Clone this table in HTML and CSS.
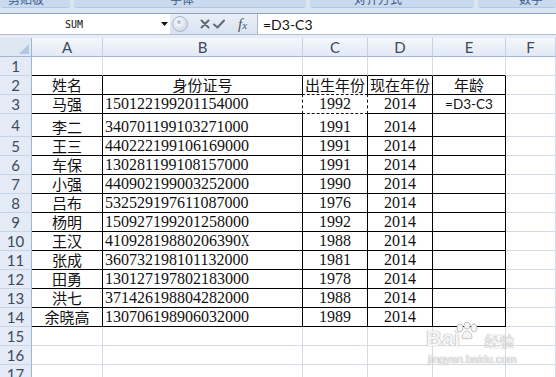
FILE: index.html
```html
<!DOCTYPE html>
<html>
<head>
<meta charset="utf-8">
<link rel="stylesheet" href="styles.css">
</head>
<body>
<div class="ribbon">
  <div class="grp g1"><span>剪贴板</span></div>
  <div class="grp g2"><span>字体</span></div>
  <div class="grp g3"><span>对齐方式</span></div>
  <div class="grp g4"><span>数字</span></div>
</div>
<div class="fbar">
  <div class="namebox">SUM</div>
  <div class="nb-arrow"><svg width="7" height="4" viewBox="0 0 7 4"><path d="M0 0H7L3.5 4Z" fill="#111"/></svg></div>
  <div class="btns">
    <svg class="bubble" width="16" height="18" viewBox="0 0 16 18"><defs><radialGradient id="bg" cx="0.4" cy="0.35" r="0.7"><stop offset="0" stop-color="#ffffff"/><stop offset="1" stop-color="#c9d4e3"/></radialGradient></defs><circle cx="8" cy="9" r="7.5" fill="url(#bg)" stroke="#a9b7ca"/><circle cx="7" cy="7" r="2" fill="#b8c3d2"/></svg>
    <svg class="ic" width="10" height="10" viewBox="0 0 10 10"><path d="M1.5 1.5L8.5 8.5M8.5 1.5L1.5 8.5" stroke="#5e6a7c" stroke-width="2" stroke-linecap="round"/></svg>
    <svg class="ic" width="12" height="10" viewBox="0 0 12 10"><path d="M1 5.5L4.5 8.5L11 1.5" stroke="#5e6a7c" stroke-width="2" fill="none" stroke-linecap="round" stroke-linejoin="round"/></svg>
    <span class="fx"><i>f</i><i class="x">x</i></span>
  </div>
  <div class="formula">=D3-C3</div>
</div>
<div class="spacer"></div>
<div class="sheet">
  <div class="corner"><svg width="10" height="10" viewBox="0 0 10 10"><path d="M10 0V10H0Z" fill="#b4c6e0"/></svg></div>
  <div class="ch">A</div><div class="ch">B</div><div class="ch">C</div><div class="ch">D</div><div class="ch">E</div><div class="ch">F</div>

  <div class="rh">1</div><div class="c tb"></div><div class="c tb"></div><div class="c tb"></div><div class="c tb"></div><div class="c tb"></div><div class="c"></div>

  <div class="rh">2</div><div class="c t cj">姓名</div><div class="c t cj">身份证号</div><div class="c t cj">出生年份</div><div class="c t cj">现在年份</div><div class="c t cj">年龄</div><div class="c"></div>

  <div class="rh">3</div><div class="c t cj">马强</div><div class="c t id">150122199201154000</div><div class="c t copy">1992</div><div class="c t">2014</div><div class="c t fm">=D3-C3</div><div class="c"></div>

  <div class="rh">4</div><div class="c t cj">李二</div><div class="c t id">340701199103271000</div><div class="c t">1991</div><div class="c t">2014</div><div class="c t"></div><div class="c"></div>

  <div class="rh">5</div><div class="c t cj">王三</div><div class="c t id">440222199106169000</div><div class="c t">1991</div><div class="c t">2014</div><div class="c t"></div><div class="c"></div>

  <div class="rh">6</div><div class="c t cj">车保</div><div class="c t id">130281199108157000</div><div class="c t">1991</div><div class="c t">2014</div><div class="c t"></div><div class="c"></div>

  <div class="rh">7</div><div class="c t cj">小强</div><div class="c t id">440902199003252000</div><div class="c t">1990</div><div class="c t">2014</div><div class="c t"></div><div class="c"></div>

  <div class="rh">8</div><div class="c t cj">吕布</div><div class="c t id">532529197611087000</div><div class="c t">1976</div><div class="c t">2014</div><div class="c t"></div><div class="c"></div>

  <div class="rh">9</div><div class="c t cj">杨明</div><div class="c t id">150927199201258000</div><div class="c t">1992</div><div class="c t">2014</div><div class="c t"></div><div class="c"></div>

  <div class="rh">10</div><div class="c t cj">王汉</div><div class="c t id">41092819880206390<span class="xx">X</span></div><div class="c t">1988</div><div class="c t">2014</div><div class="c t"></div><div class="c"></div>

  <div class="rh">11</div><div class="c t cj">张成</div><div class="c t id">360732198101132000</div><div class="c t">1981</div><div class="c t">2014</div><div class="c t"></div><div class="c"></div>

  <div class="rh">12</div><div class="c t cj">田勇</div><div class="c t id">130127197802183000</div><div class="c t">1978</div><div class="c t">2014</div><div class="c t"></div><div class="c"></div>

  <div class="rh">13</div><div class="c t cj">洪七</div><div class="c t id">371426198804282000</div><div class="c t">1988</div><div class="c t">2014</div><div class="c t"></div><div class="c"></div>

  <div class="rh">14</div><div class="c t cj">余晓高</div><div class="c t id">130706198906032000</div><div class="c t">1989</div><div class="c t">2014</div><div class="c t"></div><div class="c"></div>

  <div class="rh">15</div><div class="c"></div><div class="c"></div><div class="c"></div><div class="c"></div><div class="c"></div><div class="c"></div>
  <div class="rh">16</div><div class="c"></div><div class="c"></div><div class="c"></div><div class="c"></div><div class="c"></div><div class="c"></div>
  <div class="rh">17</div><div class="c"></div><div class="c"></div><div class="c"></div><div class="c"></div><div class="c"></div><div class="c"></div>
</div>
<div class="watermark">
  <div class="wm-top"><span class="bai">Bai</span><svg class="paw" width="26" height="18" viewBox="0 0 26 18"><g fill="#f4f4f4" stroke="#c4c4c4" stroke-width="1"><ellipse cx="6" cy="6" rx="3" ry="4"/><ellipse cx="13" cy="3.5" rx="3" ry="3.5"/><ellipse cx="20" cy="6" rx="3" ry="4"/><path d="M8 16C8 11 11 9 13 9C15 9 18 11 18 16C16 17 10 17 8 16Z"/></g></svg><span class="jy">经验</span></div>
  <div class="wm-url">jingyan.baidu.com</div>
</div>
</body>
</html>
```

FILE: styles.css
```css
html, body {
  margin: 0;
  padding: 0;
}
body {
  width: 556px;
  height: 377px;
  overflow: hidden;
  background: #ffffff;
  position: relative;
  font-family: "Liberation Sans", sans-serif;
}

/* ribbon remnants */
.ribbon {
  height: 13px;
  background: #dae5f3;
  display: flex;
  gap: 4px;
  align-items: flex-start;
}
.grp {
  height: 8px;
  background: #c9d9ee;
  border-bottom: 1px solid #b3c6e0;
  border-radius: 0 0 3px 3px;
  overflow: hidden;
  display: flex;
  font-family: "Noto Sans CJK SC", sans-serif;
  font-size: 12px;
  color: #3d5d8c;
}
.grp span {
  margin-top: -9px;
  line-height: 16px;
  white-space: nowrap;
}
.g1 { width: 70px; padding-left: 8px; box-sizing: border-box; }
.g2 { width: 232px; padding-left: 96px; box-sizing: border-box; }
.g3 { width: 164px; padding-left: 44px; box-sizing: border-box; }
.g4 { width: 78px; padding-left: 41px; box-sizing: border-box; }

/* formula bar */
.fbar {
  display: flex;
  height: 22px;
  box-sizing: border-box;
  border-top: 1px solid #8ea2bd;
  border-bottom: 1px solid #b0bfd3;
  background: linear-gradient(#e9eff8, #d9e3f1);
}
.namebox {
  width: 158px;
  padding-right: 10px;
  box-sizing: border-box;
  background: #ffffff;
  display: flex;
  align-items: center;
  justify-content: center;
  font-family: "DejaVu Sans Mono", monospace;
  font-size: 10px;
  color: #111;
}
.nb-arrow {
  width: 12px;
  background: #ffffff;
  display: flex;
  align-items: center;
  justify-content: center;
}
.btns {
  width: 87px;
  display: flex;
  align-items: center;
  padding-left: 2px;
  box-sizing: border-box;
}
.bubble { margin-right: 12px; }
.ic { margin-right: 3px; }
.fx {
  margin-left: 10px;
  font-family: "Liberation Serif", serif;
  font-size: 15px;
  color: #4a5566;
  line-height: 1;
}
.fx .x { font-size: 11px; }
.formula {
  flex: 1;
  background: #ffffff;
  border-left: 1px solid #a7b7cd;
  display: flex;
  align-items: center;
  padding-left: 5px;
  font-family: Lato, "Liberation Sans", sans-serif;
  font-size: 14px;
  color: #111;
}
.spacer {
  height: 3px;
  background: #e7edf6;
}

/* sheet grid */
.sheet {
  display: grid;
  grid-template-columns: 32px 71px 200px 65px 65px 73px 50px;
  grid-template-rows: 19px 19px 19px 19px 23px repeat(13, 19px);
}
.corner {
  background: #dfe7f3;
  border-right: 1px solid #9eb6ce;
  border-bottom: 1px solid #9eb6ce;
  box-sizing: border-box;
  display: flex;
  align-items: flex-end;
  justify-content: flex-end;
  padding: 0 2px 2px 0;
}
.ch {
  background: linear-gradient(#f4f7fb, #e2e9f4);
  border-right: 1px solid #c7d3e3;
  border-bottom: 1px solid #9eb6ce;
  box-sizing: border-box;
  display: flex;
  align-items: center;
  justify-content: center;
  font-family: Lato, "Liberation Sans", sans-serif;
  font-size: 15px;
  color: #3c4a5e;
}
.rh {
  background: #e4ebf6;
  border-right: 1px solid #9eb6ce;
  border-bottom: 1px solid #c6d4e7;
  box-sizing: border-box;
  display: flex;
  align-items: center;
  justify-content: center;
  font-family: Lato, "Liberation Sans", sans-serif;
  font-size: 15px;
  color: #3c4a5e;
}
.c {
  border-right: 1px solid #d5dbe5;
  border-bottom: 1px solid #d5dbe5;
  box-sizing: border-box;
  display: flex;
  align-items: flex-end;
  justify-content: center;
  line-height: 18px;
  font-family: "Liberation Serif", serif;
  font-size: 16px;
  color: #111;
  white-space: nowrap;
}
.c.t {
  border-right-color: #000;
  border-bottom-color: #000;
}
.c.tb {
  border-bottom-color: #000;
}
.c.cj {
  font-family: "Noto Sans CJK SC", sans-serif;
  font-size: 15px;
}
.c.id {
  justify-content: flex-start;
  padding-left: 2px;
}
.xx {
  display: inline-block;
  transform: scaleX(0.72);
  transform-origin: left center;
}
.c.fm {
  font-family: Lato, "Liberation Sans", sans-serif;
  font-size: 13.5px;
}
.c.copy {
  position: relative;
}
.c.copy::before,
.c.copy::after {
  content: "";
  position: absolute;
  top: -1px;
  left: -1px;
  right: -1px;
  bottom: -1px;
  box-sizing: border-box;
}
.c.copy::before {
  border: 1px solid #ffffff;
}
.c.copy::after {
  border: 1px dashed #111;
}

/* watermark */
.watermark {
  position: absolute;
  left: 426px;
  top: 318px;
  width: 100px;
  color: #f4f4f4;
  text-shadow: 0 0 1px #a8a8a8, 0 0 1px #a8a8a8;
}
.wm-top {
  display: flex;
  align-items: flex-end;
  height: 32px;
}
.bai {
  font-family: "Liberation Sans", sans-serif;
  font-weight: bold;
  font-size: 22px;
  line-height: 22px;
}
.paw {
  margin: 0 -2px 10px -6px;
}
.jy {
  font-family: "Noto Sans CJK SC", sans-serif;
  font-size: 15px;
  line-height: 18px;
  margin-left: 6px;
}
.wm-url {
  font-family: "Liberation Sans", sans-serif;
  font-size: 11px;
  margin-top: 3px;
  padding-left: 2px;
}
```
